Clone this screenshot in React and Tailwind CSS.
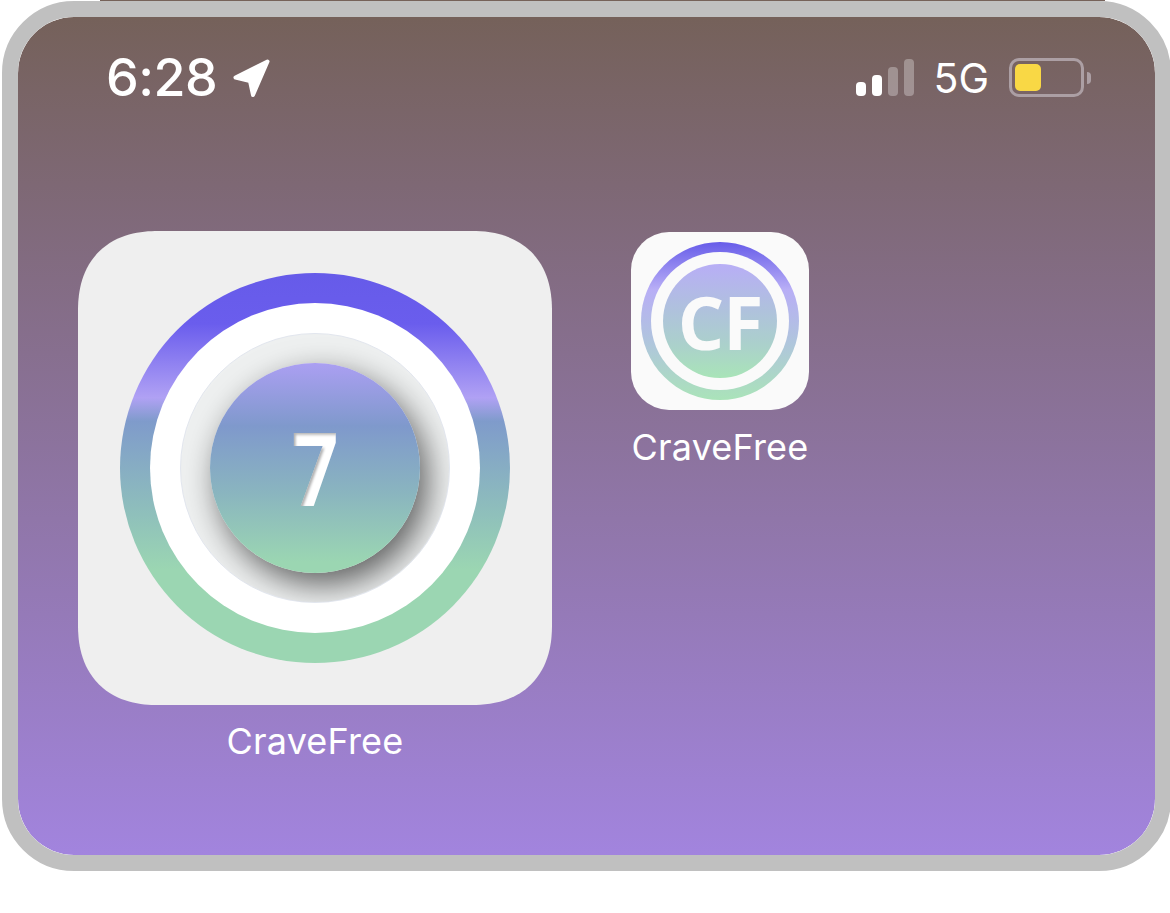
// Home screen widget preview inside a rounded phone frame
function LocationArrow() {
  return (
    <svg width="40" height="40" viewBox="0 0 40 40" className="ml-[15px]">
      <path
        d="M35.5 3.5 L3.5 19.5 L18 23 L21 37 Z"
        fill="#fff"
        stroke="#fff"
        strokeWidth="4"
        strokeLinejoin="round"
      />
    </svg>
  );
}

function StatusBar() {
  return (
    <div className="flex items-center justify-between pl-[88px] pr-[64px] pt-[41px] h-[81px] text-white font-['Inter',sans-serif]">
      <div className="flex items-center">
        <span className="text-[52px] leading-none font-medium tracking-[-0.5px]">6:28</span>
        <LocationArrow />
      </div>
      <div className="flex items-center">
        <div className="flex items-end gap-[6px] h-[37px] -mt-[1px]">
          <div className="w-[10px] h-[14px] rounded-[4px] bg-white" />
          <div className="w-[10px] h-[21px] rounded-[4px] bg-white" />
          <div className="w-[10px] h-[29px] rounded-[4px] bg-white/30" />
          <div className="w-[10px] h-[37px] rounded-[4px] bg-white/30" />
        </div>
        <span className="ml-[19px] text-[41px] leading-none">5G</span>
        <div className="ml-[20px] w-[75px] h-[39px] -mt-[1px] rounded-[10px] border-[3px] border-[#ac9fa4] p-[3px]">
          <div className="w-[26px] h-full rounded-[5px] bg-[#f9d845]" />
        </div>
        <div className="ml-[3px] w-[4px] h-[12px] rounded-r-[6px] bg-[#ac9fa4]" />
      </div>
    </div>
  );
}

function AppLabel() {
  return (
    <div className="text-center text-white text-[36px] leading-[40px] tracking-[0.2px] font-['Inter',sans-serif]">
      CraveFree
    </div>
  );
}

function LargeIcon() {
  return (
    <div className="w-[474px] h-[474px] rounded-[80px] [corner-shape:superellipse(1.2)] bg-[#efefef] flex items-center justify-center">
      <div className="w-[390px] h-[390px] rounded-full flex items-center justify-center bg-[linear-gradient(180deg,#665be9_0%,#6a5ded_13%,#b0a1f4_32%,#7f9bcb_38%,#8fc0bb_62%,#9bd6b2_76%,#9bd6b2_100%)]">
        <div className="w-[330px] h-[330px] rounded-full bg-white flex items-center justify-center">
          <div className="w-[270px] h-[270px] rounded-full bg-[#eef0f0] border border-[#e2e6ee] overflow-hidden flex items-center justify-center">
            <div className="w-[210px] h-[210px] rounded-full flex items-center justify-center bg-[linear-gradient(180deg,#ab9ff2_0%,#7f99cc_30%,#8ab5bf_62%,#9bd6b2_95%)] shadow-[8px_12px_32px_rgba(0,0,0,0.6)]">
              <span className="text-[102px] leading-none font-bold text-white -mt-[3px] scale-x-[0.8] [filter:url(#inset7)] font-['Open_Sans',sans-serif]">
                7
              </span>
            </div>
          </div>
        </div>
      </div>
    </div>
  );
}

function SmallIcon() {
  return (
    <div className="w-[178px] h-[178px] rounded-[38px] bg-[#fafafa] flex items-center justify-center">
      <div className="w-[158px] h-[158px] rounded-full flex items-center justify-center bg-[linear-gradient(180deg,#675ce9_0%,#b8aef6_30%,#b0c4de_62%,#aae3b9_100%)]">
        <div className="w-[138px] h-[138px] rounded-full bg-[#fafafa] flex items-center justify-center">
          <div className="w-[114px] h-[114px] rounded-full flex items-center justify-center bg-[linear-gradient(180deg,#b8aef6_0%,#b0bfe0_35%,#abd0cc_70%,#a9e4b8_100%)]">
            <span className="text-[73px] leading-none font-bold text-[#fafafa] tracking-[-1px] font-['Open_Sans',sans-serif]">
              CF
            </span>
          </div>
        </div>
      </div>
    </div>
  );
}

export default function App() {
  return (
    <div className="w-[1170px] h-[913px] overflow-hidden bg-white">
      {/* inner shadow used on the big 7 */}
      <svg width="0" height="0" className="absolute">
        <filter id="inset7" x="-20%" y="-20%" width="140%" height="140%">
          <feFlood floodColor="#000" floodOpacity="0.55" />
          <feComposite operator="out" in2="SourceAlpha" />
          <feGaussianBlur stdDeviation="1.5" />
          <feOffset dx="2" dy="2" />
          <feComposite operator="in" in2="SourceAlpha" result="shade" />
          <feMerge>
            <feMergeNode in="SourceGraphic" />
            <feMergeNode in="shade" />
          </feMerge>
        </filter>
      </svg>
      <div className="ml-[100px] w-[1005px] h-px bg-[#76625a]" />
      <div className="ml-[2px] w-[1169px] h-[870px] rounded-[72px] border-[16px] border-[#c0c0c0] overflow-hidden">
        <div className="h-full rounded-[56px] bg-[linear-gradient(180deg,#75615a_0%,#a284de_100%)]">
          <StatusBar />
          <div className="flex items-start gap-[79px] pl-[60px] pt-[133px]">
            <div className="flex flex-col gap-[16px]">
              <LargeIcon />
              <AppLabel />
            </div>
            <div className="flex flex-col gap-[17px] mt-px">
              <SmallIcon />
              <AppLabel />
            </div>
          </div>
        </div>
      </div>
    </div>
  );
}
